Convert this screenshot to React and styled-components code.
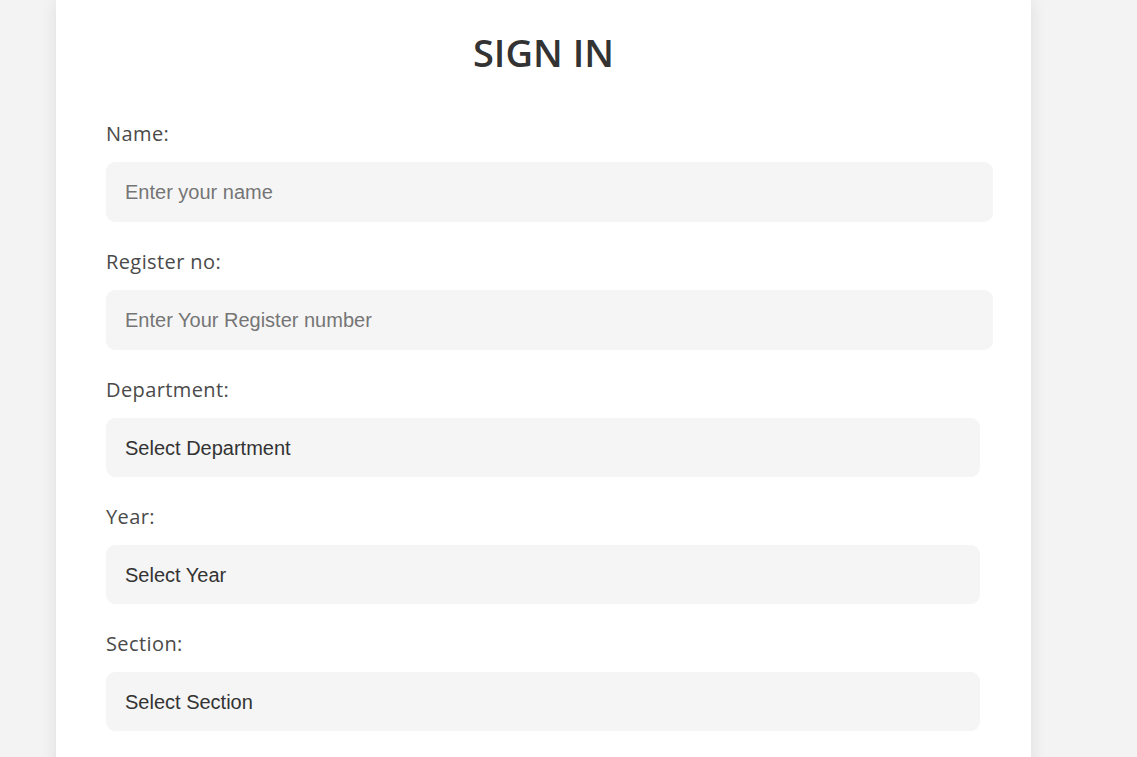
import React from 'react'
import styled, { createGlobalStyle } from 'styled-components'

const GlobalStyle = createGlobalStyle`
  html, body {
    margin: 0;
    padding: 0;
    background: #f3f3f3;
    height: 100%;
    overflow: hidden;
  }
`

const Page = styled.div`
  display: flex;
  justify-content: flex-start;
  padding-left: 56px;
  min-height: 757px;
`

const Card = styled.form`
  width: 975px;
  box-sizing: border-box;
  background: #ffffff;
  padding: 22px 50px 40px 50px;
  box-shadow: 0 0 16px rgba(0, 0, 0, 0.09);
  font-family: 'Open Sans', 'Liberation Sans', sans-serif;
`

const Title = styled.h1`
  margin: 0 0 37px;
  text-align: center;
  font-size: 38px;
  line-height: 60px;
  font-weight: 600;
  color: #333333;
`

const Field = styled.div`
  display: flex;
  flex-direction: column;
  margin-bottom: 25px;
`

const Label = styled.label`
  font-size: 20px;
  line-height: 30px;
  letter-spacing: 0.4px;
  color: #4a4a4a;
  margin-bottom: 13px;
`

const Input = styled.input`
  display: block;
  width: 887px;
  height: 60px;
  box-sizing: border-box;
  border: none;
  border-radius: 9px;
  background: #f5f5f5;
  padding: 0 19px;
  font-family: 'Liberation Sans', Arial, sans-serif;
  font-size: 20px;
  color: #333333;
  outline: none;
  &::placeholder {
    color: #757575;
  }
`

const Select = styled.select`
  display: block;
  width: 874px;
  height: 59px;
  box-sizing: border-box;
  border: none;
  border-radius: 9px;
  background: #f5f5f5;
  padding: 0 19px;
  font-family: 'Liberation Sans', Arial, sans-serif;
  font-size: 20px;
  color: #333333;
  appearance: none;
  -webkit-appearance: none;
  outline: none;
`

const App = () => (
  <>
    <GlobalStyle />
    <Page>
      <Card onSubmit={e => e.preventDefault()}>
        <Title>SIGN IN</Title>
        <Field>
          <Label>Name:</Label>
          <Input type='text' placeholder='Enter your name' />
        </Field>
        <Field>
          <Label>Register no:</Label>
          <Input type='text' placeholder='Enter Your Register number' />
        </Field>
        <Field>
          <Label>Department:</Label>
          <Select defaultValue=''>
            <option value=''>Select Department</option>
          </Select>
        </Field>
        <Field>
          <Label>Year:</Label>
          <Select defaultValue=''>
            <option value=''>Select Year</option>
          </Select>
        </Field>
        <Field>
          <Label>Section:</Label>
          <Select defaultValue=''>
            <option value=''>Select Section</option>
          </Select>
        </Field>
      </Card>
    </Page>
  </>
)

export default App
